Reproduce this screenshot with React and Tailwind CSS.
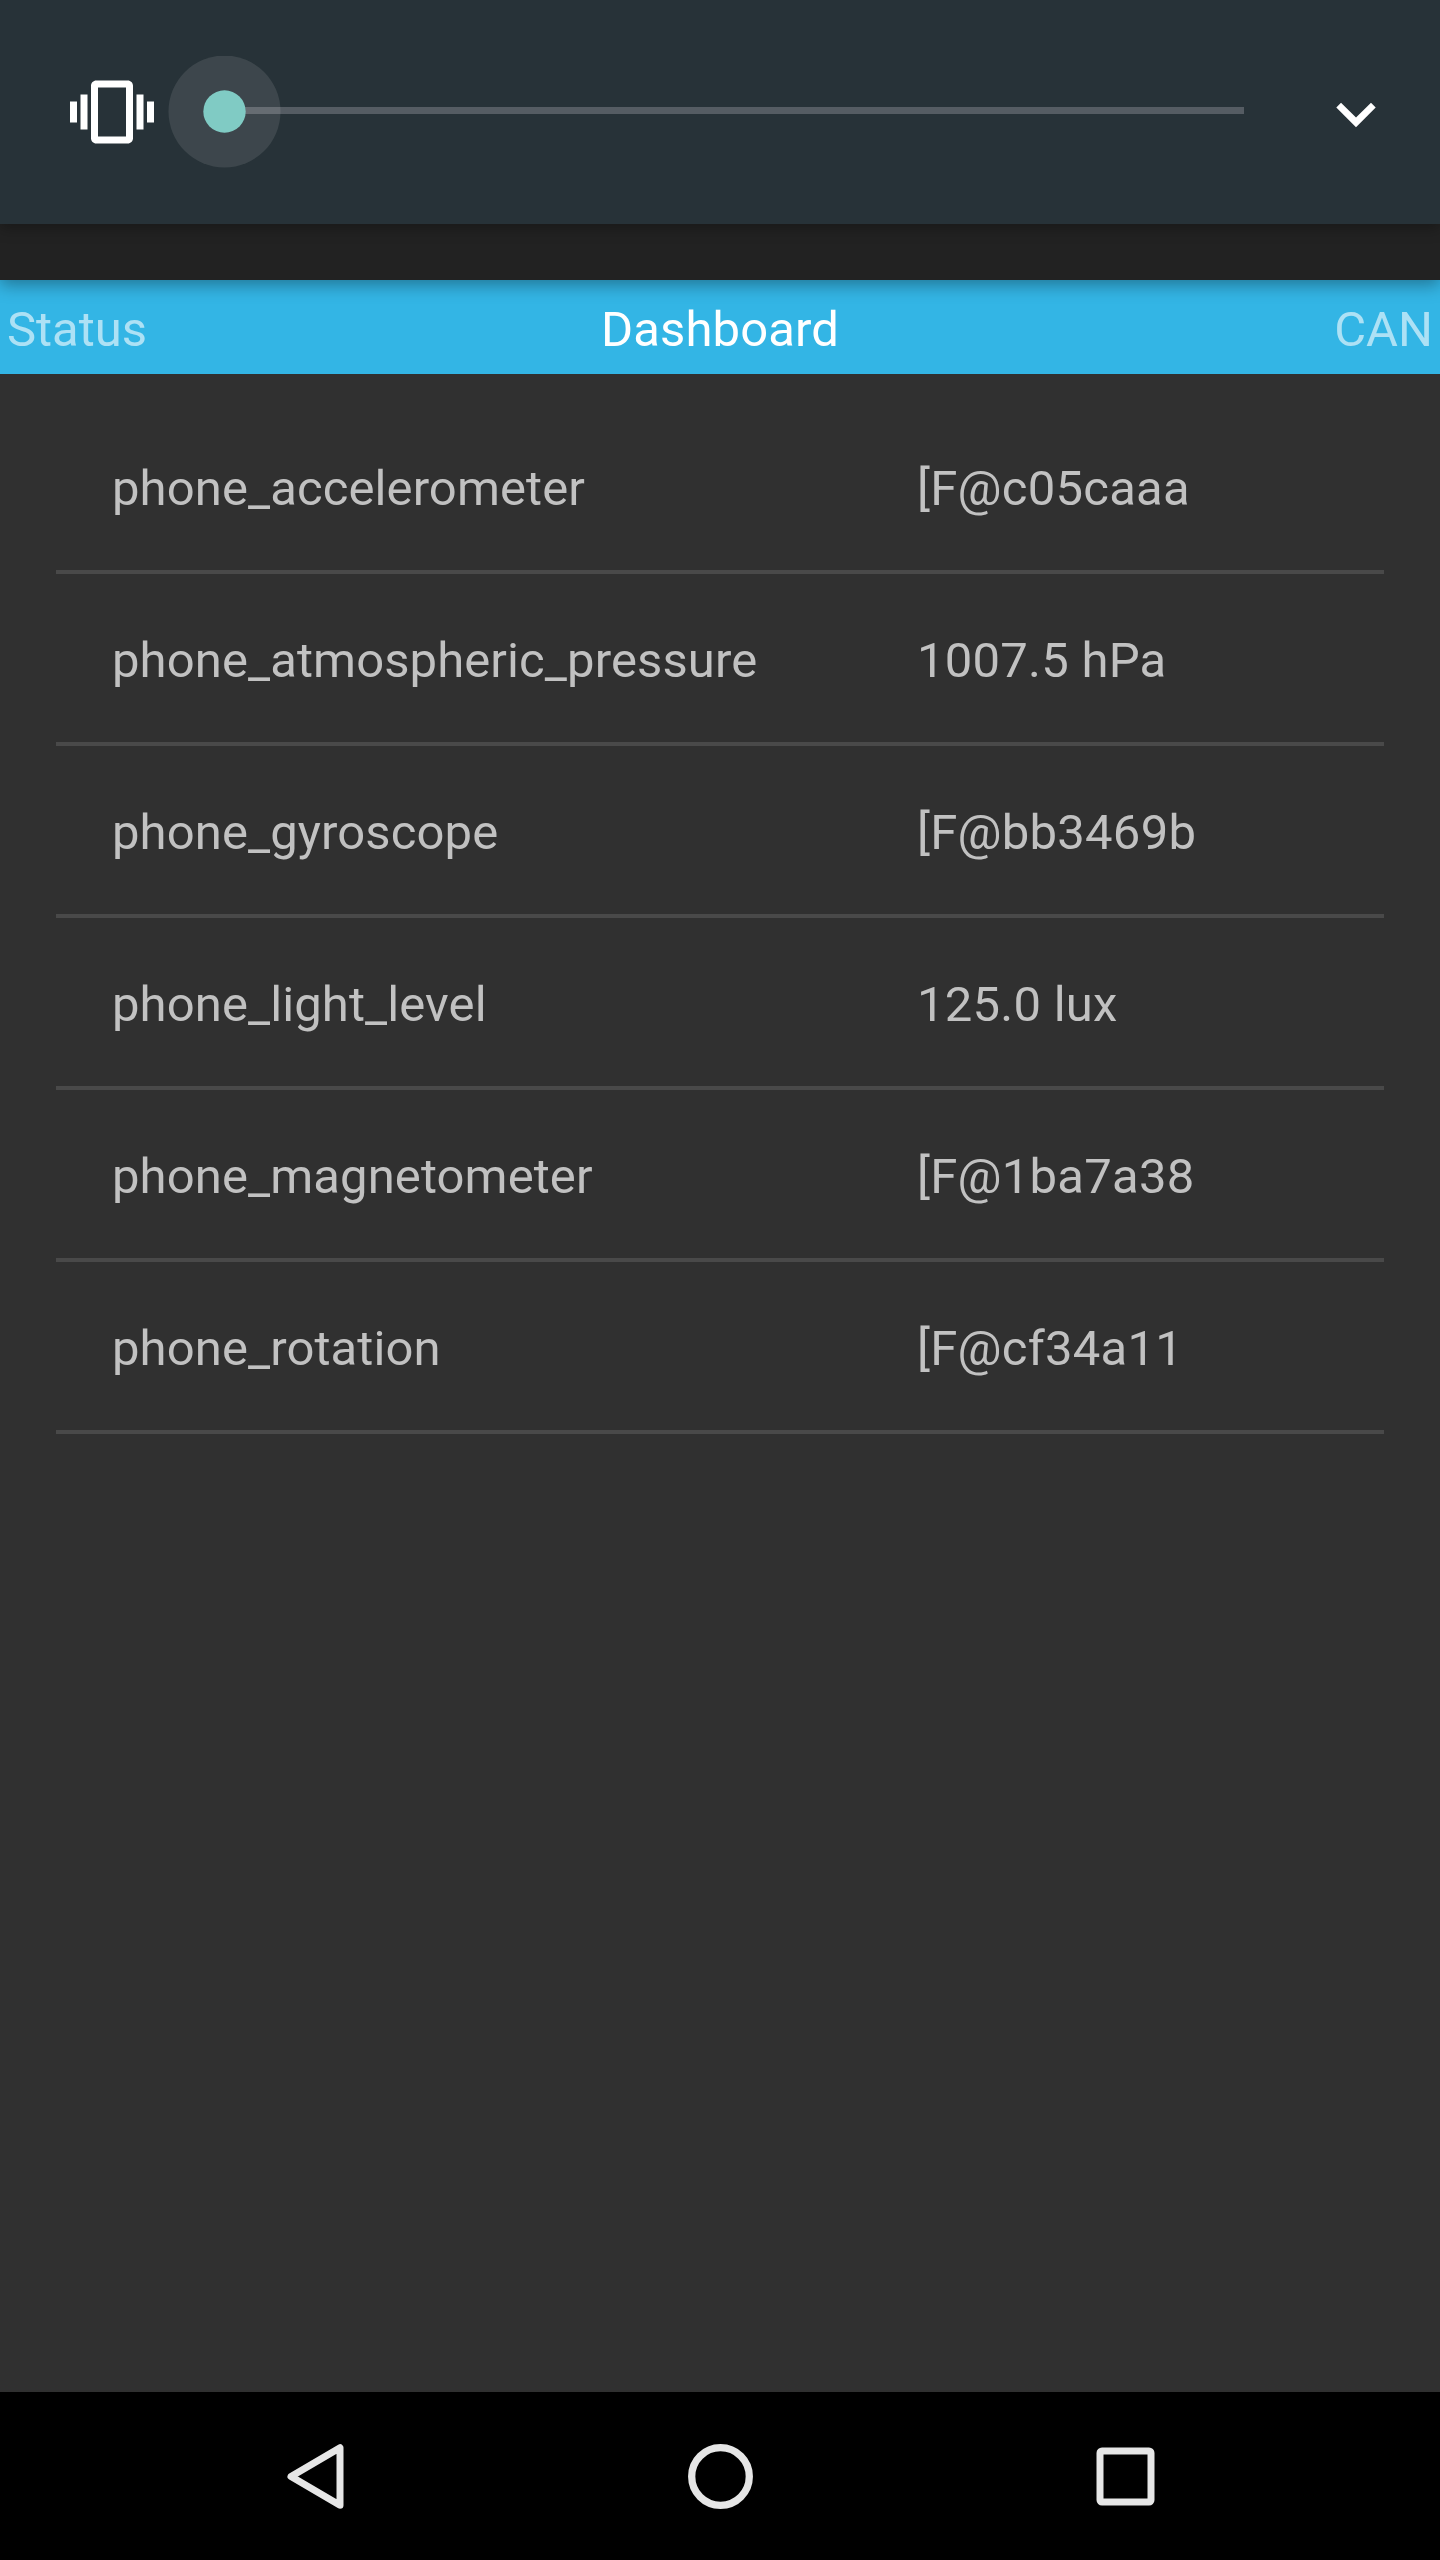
const rows = [
  ['phone_accelerometer', '[F@c05caaa'],
  ['phone_atmospheric_pressure', '1007.5 hPa'],
  ['phone_gyroscope', '[F@bb3469b'],
  ['phone_light_level', '125.0 lux'],
  ['phone_magnetometer', '[F@1ba7a38'],
  ['phone_rotation', '[F@cf34a11'],
];

function VolumePanel() {
  return (
    <header className="relative z-20 flex h-[224px] items-center bg-[#273238] pl-[70px] shadow-[0_4px_14px_rgba(0,0,0,0.3)]">
      <svg className="size-[84px] shrink-0" viewBox="0 0 24 24" fill="#fff" aria-label="Vibrate">
        <path d="M0 15h2V9H0v6zm3 2h2V7H3v10zm19-8v6h2V9h-2zm-3 8h2V7h-2v10zM16.5 3h-9C6.67 3 6 3.67 6 4.5v15c0 .83.67 1.5 1.5 1.5h9c.83 0 1.5-.67 1.5-1.5v-15c0-.83-.67-1.5-1.5-1.5zM16 19H8V5h8v14z" />
      </svg>
      <svg className="ml-[14px] h-28 w-[1076px] shrink-0" viewBox="0 0 1076 112" aria-label="Volume">
        <rect x="56" y="51" width="1020" height="7" fill="#555c63" />
        <circle cx="56.5" cy="55.5" r="56" fill="#fff" fillOpacity="0.1" />
        <circle cx="56.5" cy="55.5" r="21.2" fill="#80cbc4" />
      </svg>
      <svg className="ml-[92px] h-8 w-10 shrink-0" viewBox="0 0 40 32" fill="#fff" aria-label="Expand">
        <path d="M5 6.7L20 21.4 35 6.7 39.7 11.4 20 31.2 0.3 11.4z" />
      </svg>
    </header>
  );
}

function TabStrip() {
  return (
    <nav className="grid h-[94px] grid-cols-3 items-center bg-[#33b5e5] px-[7px] pt-[5px] leading-[58px]">
      <span className="text-white/60">Status</span>
      <span className="text-center tracking-[0.12px] text-white">Dashboard</span>
      <span className="text-right text-white/60">CAN</span>
    </nav>
  );
}

function NavigationBar() {
  return (
    <footer className="flex h-[168px] items-center bg-black pl-[284px]">
      <svg className="h-[70px] w-[64px]" viewBox="0 0 64 70" fill="none" stroke="#e6e6e6" strokeWidth="7" strokeLinejoin="round">
        <path d="M7 35.5L56 6.7V64.3Z" />
      </svg>
      <svg className="ml-[338px] size-[70px]" viewBox="0 0 70 70" fill="none" stroke="#e6e6e6" strokeWidth="7.3">
        <circle cx="34.5" cy="35.5" r="28.8" />
      </svg>
      <svg className="ml-[338px] size-[64px]" viewBox="0 0 64 64" fill="none" stroke="#e6e6e6" strokeWidth="7">
        <rect x="6" y="7" width="51" height="51" rx="2" />
      </svg>
    </footer>
  );
}

export default function App() {
  return (
    <div className="flex h-[2560px] w-[1440px] flex-col overflow-hidden bg-[#303030] font-['Roboto',sans-serif] text-[49px]">
      <VolumePanel />
      <div className="relative z-10 h-14 bg-[#222222] shadow-[0_5px_16px_rgba(0,0,0,0.35)]" />
      <TabStrip />
      <main className="flex-1 px-14 pt-7">
        {rows.map(([name, value]) => (
          <div key={name} className="flex h-[172px] items-center border-b-4 border-[#494949] px-14 pt-[6px] leading-[58px] text-[#c1c1c1]">
            <span className="w-[805px] tracking-[0.1px]">{name}</span>
            <span className="tracking-[0.24px]">{value}</span>
          </div>
        ))}
      </main>
      <NavigationBar />
    </div>
  );
}
